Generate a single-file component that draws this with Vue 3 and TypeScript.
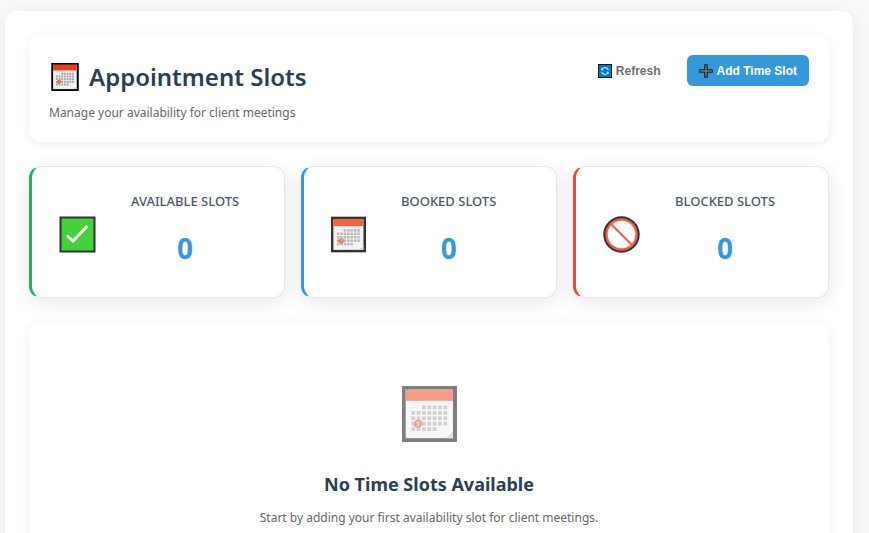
<script setup lang="ts">
import { computed, ref } from 'vue'

type SlotStatus = 'available' | 'booked' | 'blocked'

interface TimeSlot {
  id: number
  status: SlotStatus
}

const slots = ref<TimeSlot[]>([])

const count = (status: SlotStatus) => slots.value.filter((s) => s.status === status).length

const stats = computed(() => [
  { status: 'available', label: 'Available Slots', icon: 'icon-check', value: count('available') },
  { status: 'booked', label: 'Booked Slots', icon: 'icon-calendar', value: count('booked') },
  { status: 'blocked', label: 'Blocked Slots', icon: 'icon-blocked', value: count('blocked') },
])

// Day cells of the calendar icon: the month starts on the third column and ends on the fifth.
const days = Array.from({ length: 35 }, (_, i) => ({ col: i % 7, row: Math.floor(i / 7) }))
  .filter(({ col, row }) => !(row === 0 && col < 2) && !(row === 4 && col > 4))
  .map(({ col, row }) => ({ x: 9.3 + col * 5.35, y: 19.6 + row * 5.4 }))
</script>

<template>
  <svg class="sprite" aria-hidden="true">
    <symbol id="icon-calendar" viewBox="0 0 55 56">
      <rect width="55" height="56" fill="#000" />
      <rect x="3.7" y="3.6" width="47.3" height="48.6" fill="#f0f0f0" />
      <rect x="3.7" y="3.6" width="47.3" height="11.2" fill="#f23a15" />
      <rect v-for="d in days" :key="`${d.x}-${d.y}`" :x="d.x" :y="d.y" width="3.8" height="3.8" fill="#a4a4a4" />
      <path d="M45 52.2v-2l6-5v7z" fill="#c9c9c9" />
      <path d="M45 50.5l1-4.5 5-1z" fill="#fff" />
      <circle cx="16" cy="37.7" r="3.1" fill="none" stroke="#f23a15" stroke-width="1.8" />
      <path d="M11.2 39.2l2.4-3.6 2 3.6z" fill="#f23a15" />
    </symbol>
    <symbol id="icon-check" viewBox="0 0 37 37">
      <rect x=".5" y=".5" width="36" height="36" fill="#000" />
      <rect x="2.5" y="2.5" width="32" height="32" fill="#16c60c" />
      <path d="M8 19.5l6 5.5L28.5 10" fill="none" stroke="#fff" stroke-width="3" />
    </symbol>
    <symbol id="icon-blocked" viewBox="0 0 37 37">
      <circle cx="18.5" cy="18.5" r="18.2" fill="#000" />
      <circle cx="18.5" cy="18.5" r="16.2" fill="#f03a17" />
      <circle cx="18.5" cy="18.5" r="13.8" fill="#fff" />
      <path d="M8.5 8.5l20 20" stroke="#f03a17" stroke-width="2.2" />
    </symbol>
    <symbol id="icon-refresh" viewBox="0 0 14 14">
      <rect width="14" height="14" fill="#07111c" />
      <rect x="1" y="1" width="12" height="12" fill="#0078d7" />
      <path d="M4 5.3A3.5 3.5 0 0 1 10.3 6M10 8.8A3.5 3.5 0 0 1 3.7 8" fill="none" stroke="#d9edff" stroke-width="1.1" />
      <path d="M3.3 3.8v2.4h2.4zM10.7 10.2V7.8H8.3z" fill="#d9edff" />
    </symbol>
    <symbol id="icon-plus" viewBox="0 0 14 14">
      <path d="M5.7 .7h2.6v5h5v2.6h-5v5H5.7v-5h-5V5.7h5z" fill="#767676" stroke="#1a2530" stroke-width="1.1" stroke-linejoin="round" />
    </symbol>
  </svg>

  <main class="panel">
    <header class="card page-header">
      <div class="heading">
        <h1>
          <svg class="title-icon" aria-hidden="true"><use href="#icon-calendar" /></svg>
          Appointment Slots
        </h1>
        <p>Manage your availability for client meetings</p>
      </div>
      <div class="actions">
        <button type="button" class="btn">
          <svg aria-hidden="true"><use href="#icon-refresh" /></svg>
          Refresh
        </button>
        <button type="button" class="btn primary">
          <svg aria-hidden="true"><use href="#icon-plus" /></svg>
          Add Time Slot
        </button>
      </div>
    </header>

    <section class="stats">
      <article v-for="s in stats" :key="s.status" class="stat" :class="s.status">
        <svg class="stat-icon" aria-hidden="true"><use :href="`#${s.icon}`" /></svg>
        <div class="stat-text">
          <h2>{{ s.label }}</h2>
          <strong>{{ s.value }}</strong>
        </div>
      </article>
    </section>

    <section class="card empty">
      <svg class="empty-icon" aria-hidden="true"><use href="#icon-calendar" /></svg>
      <h2>No Time Slots Available</h2>
      <p>Start by adding your first availability slot for client meetings.</p>
    </section>
  </main>
</template>

<style>
body {
  background: #f8f9fb;
}
</style>

<style scoped>
.sprite {
  position: absolute;
  width: 0;
  height: 0;
}

h1,
h2,
p {
  margin: 0;
}

.panel {
  display: flex;
  flex-direction: column;
  gap: 24px;
  margin: 11px 16px 24px 5px;
  padding: 24px;
  border-radius: 12px;
  background: #fff;
  box-shadow: 0 4px 20px rgba(0, 0, 0, 0.08);
  color: #2c3e50;
  font-family: 'Segoe UI', 'Noto Sans', 'Open Sans', sans-serif;
}

.card {
  border-radius: 12px;
  background: #fff;
  box-shadow: 0 2px 10px rgba(0, 0, 0, 0.08);
}

.page-header {
  display: flex;
  align-items: flex-start;
  justify-content: space-between;
  padding: 20px 20px 19px;
}

.heading {
  display: flex;
  flex-direction: column;
  gap: 4px;
}

h1 {
  display: flex;
  align-items: center;
  gap: 10px;
  font-size: 24px;
  font-weight: 600;
  line-height: 44px;
}

.title-icon {
  width: 28px;
  height: 28px;
  margin-left: 2px;
}

p {
  color: #666;
  font-size: 12px;
  line-height: 20px;
}

.actions {
  display: flex;
  gap: 14px;
}

.btn {
  display: flex;
  align-items: center;
  gap: 4px;
  height: 31px;
  padding: 0 12px;
  border: 0;
  border-radius: 6px;
  background: transparent;
  color: #6b7075;
  font: bold 12px 'Liberation Sans', Arial, sans-serif;
  cursor: pointer;
}

.btn svg {
  width: 14px;
  height: 14px;
}

.primary {
  background: #3498db;
  color: #fff;
}

.stats {
  display: grid;
  grid-template-columns: repeat(3, 1fr);
  gap: 16px;
}

.stat {
  display: flex;
  align-items: center;
  gap: 35px;
  padding: 24px 27px;
  border: 1px solid #e1e8ed;
  border-left-width: 3px;
  border-radius: 12px;
  background: #fff;
  box-shadow: 0 4px 20px rgba(0, 0, 0, 0.1);
}

.available {
  border-left-color: #27ae60;
}

.booked {
  border-left-color: #3498db;
}

.blocked {
  border-left-color: #e74c3c;
}

.stat-icon {
  flex: none;
  width: 37px;
  height: 37px;
  margin-top: 4px;
  opacity: 0.8;
}

.booked .stat-icon {
  width: 35px;
}

.stat-text {
  text-align: center;
}

.stat h2 {
  color: #4a5a6a;
  font-size: 13px;
  font-weight: 500;
  line-height: 20px;
  text-transform: uppercase;
  white-space: nowrap;
}

.stat strong {
  display: block;
  margin-top: 12px;
  color: #3498db;
  font-size: 28px;
  font-weight: 700;
  line-height: 50px;
}

.empty {
  display: flex;
  flex-direction: column;
  align-items: center;
  padding: 64px 20px;
  text-align: center;
}

.empty-icon {
  width: 55px;
  height: 56px;
  opacity: 0.5;
}

.empty h2 {
  margin: 28px 0 10px;
  font-size: 18px;
  font-weight: 700;
  line-height: 28px;
}
</style>
